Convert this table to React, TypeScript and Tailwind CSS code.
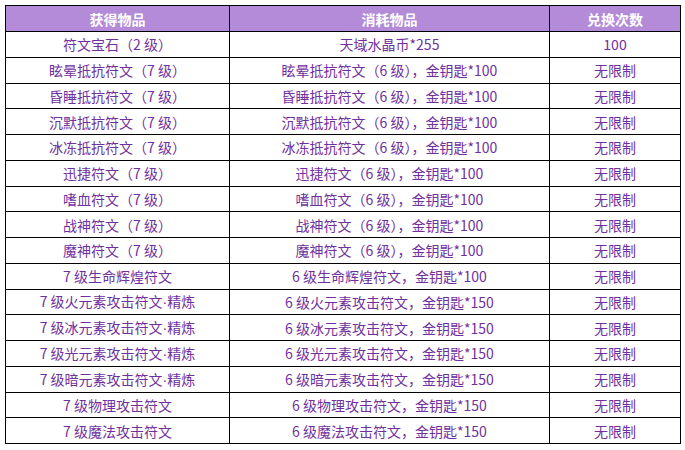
const rows: [string, string, string][] = [
  ["符文宝石（2 级）", "天域水晶币*255", "100"],
  ["眩晕抵抗符文（7 级）", "眩晕抵抗符文（6 级），金钥匙*100", "无限制"],
  ["昏睡抵抗符文（7 级）", "昏睡抵抗符文（6 级），金钥匙*100", "无限制"],
  ["沉默抵抗符文（7 级）", "沉默抵抗符文（6 级），金钥匙*100", "无限制"],
  ["冰冻抵抗符文（7 级）", "冰冻抵抗符文（6 级），金钥匙*100", "无限制"],
  ["迅捷符文（7 级）", "迅捷符文（6 级），金钥匙*100", "无限制"],
  ["嗜血符文（7 级）", "嗜血符文（6 级），金钥匙*100", "无限制"],
  ["战神符文（7 级）", "战神符文（6 级），金钥匙*100", "无限制"],
  ["魔神符文（7 级）", "魔神符文（6 级），金钥匙*100", "无限制"],
  ["7 级生命辉煌符文", "6 级生命辉煌符文，金钥匙*100", "无限制"],
  ["7 级火元素攻击符文·精炼", "6 级火元素攻击符文，金钥匙*150", "无限制"],
  ["7 级冰元素攻击符文·精炼", "6 级冰元素攻击符文，金钥匙*150", "无限制"],
  ["7 级光元素攻击符文·精炼", "6 级光元素攻击符文，金钥匙*150", "无限制"],
  ["7 级暗元素攻击符文·精炼", "6 级暗元素攻击符文，金钥匙*150", "无限制"],
  ["7 级物理攻击符文", "6 级物理攻击符文，金钥匙*150", "无限制"],
  ["7 级魔法攻击符文", "6 级魔法攻击符文，金钥匙*150", "无限制"],
];

function Cell({ text }: { text: string }) {
  const parts = text.split("·");
  if (parts.length === 1) return <>{text}</>;
  return (
    <>
      {parts[0]}
      <span className="font-['Liberation_Sans',sans-serif]">·</span>
      {parts[1]}
    </>
  );
}

export default function App() {
  return (
    <div className="w-[685px] h-[450px] bg-white pt-[5px] pl-[5px] font-['Noto_Sans_CJK_SC',sans-serif]">
      <table className="border-collapse table-fixed w-[675px] text-[14px] leading-none">
        <colgroup>
          <col className="w-[224px]" />
          <col className="w-[320px]" />
          <col className="w-[131px]" />
        </colgroup>
        <thead>
          <tr className="bg-[#b38bd9] text-white h-[26px]">
            <th className="border border-black font-bold p-0">获得物品</th>
            <th className="border border-black font-bold p-0">消耗物品</th>
            <th className="border border-black font-bold p-0">兑换次数</th>
          </tr>
        </thead>
        <tbody className="text-[#7030a0]">
          {rows.map((r, i) => (
            <tr key={i} className="h-[25.75px]">
              {r.map((c, j) => (
                <td key={j} className="border border-black text-center p-0">
                  <Cell text={c} />
                </td>
              ))}
            </tr>
          ))}
        </tbody>
      </table>
    </div>
  );
}
